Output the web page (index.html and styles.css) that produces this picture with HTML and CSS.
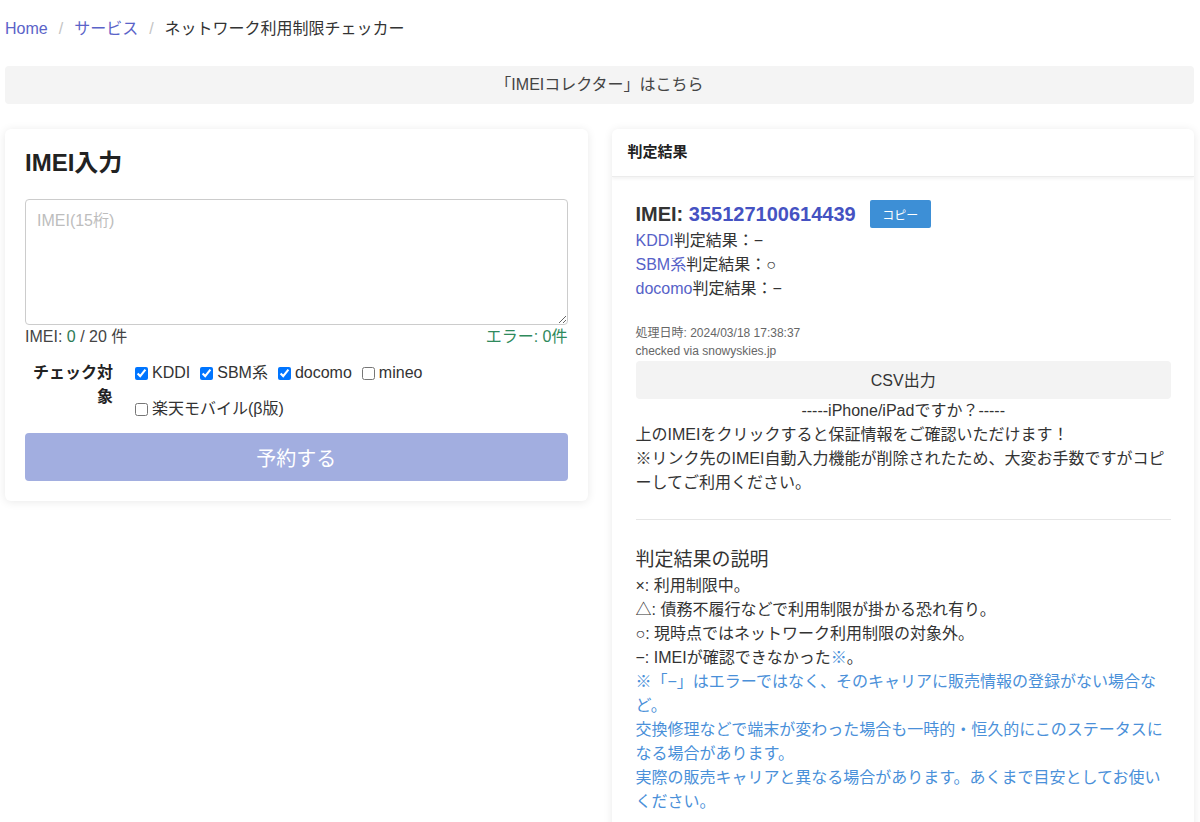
FILE: index.html
```html
<!DOCTYPE html>
<html lang="ja">
<head>
<meta charset="utf-8">
<title>ネットワーク利用制限チェッカー</title>
<link rel="stylesheet" href="styles.css">
</head>
<body>
<div class="page">
  <nav class="breadcrumb">
    <a href="#" class="crumb-link">Home</a>
    <span class="crumb-sep">/</span>
    <a href="#" class="crumb-link">サービス</a>
    <span class="crumb-sep">/</span>
    <span class="crumb-current">ネットワーク利用制限チェッカー</span>
  </nav>

  <a href="#" class="collector-bar">「IMEIコレクター」はこちら</a>

  <div class="columns">
    <section class="card input-card">
      <h2 class="card-title">IMEI入力</h2>
      <textarea class="imei-input" placeholder="IMEI(15桁)"></textarea>
      <div class="count-row">
        <span class="count">IMEI: <span class="count-num">0</span> / 20 件</span>
        <span class="error-count">エラー: 0件</span>
      </div>
      <div class="check-row">
        <div class="check-label">チェック対象</div>
        <div class="check-options">
          <label class="opt"><input type="checkbox" checked>KDDI</label>
          <label class="opt"><input type="checkbox" checked>SBM系</label>
          <label class="opt"><input type="checkbox" checked>docomo</label>
          <label class="opt"><input type="checkbox">mineo</label>
          <label class="opt"><input type="checkbox">楽天モバイル(β版)</label>
        </div>
      </div>
      <button class="submit-btn" disabled>予約する</button>
    </section>

    <section class="card result-card">
      <div class="result-header">判定結果</div>
      <div class="result-body">
        <div class="imei-row">
          <span class="imei-label">IMEI: <a href="#" class="imei-num">355127100614439</a></span>
          <button class="copy-btn">コピー</button>
        </div>
        <div class="result-lines">
          <div><a href="#" class="carrier">KDDI</a>判定結果：−</div>
          <div><a href="#" class="carrier">SBM系</a>判定結果：○</div>
          <div><a href="#" class="carrier">docomo</a>判定結果：−</div>
        </div>
        <div class="meta">
          <div>処理日時: 2024/03/18 17:38:37</div>
          <div>checked via snowyskies.jp</div>
        </div>
        <button class="csv-btn">CSV出力</button>
        <div class="iphone-title">-----iPhone/iPadですか？-----</div>
        <p class="text-block">上のIMEIをクリックすると保証情報をご確認いただけます！<br>※リンク先のIMEI自動入力機能が削除されたため、大変お手数ですがコピーしてご利用ください。</p>
        <hr class="divider">
        <h3 class="explain-title">判定結果の説明</h3>
        <div class="explain">
          <div>×: 利用制限中。</div>
          <div>△: 債務不履行などで利用制限が掛かる恐れ有り。</div>
          <div>○: 現時点ではネットワーク利用制限の対象外。</div>
          <div>−: IMEIが確認できなかった<span class="note">※</span>。</div>
          <div class="note">※「−」はエラーではなく、そのキャリアに販売情報の登録がない場合など。</div>
          <div class="note">交換修理などで端末が変わった場合も一時的・恒久的にこのステータスになる場合があります。</div>
          <div class="note">実際の販売キャリアと異なる場合があります。あくまで目安としてお使いください。</div>
        </div>
      </div>
    </section>
  </div>
</div>
</body>
</html>
```

FILE: styles.css
```css
* { box-sizing: border-box; }

html, body {
  margin: 0;
  padding: 0;
  background: #ffffff;
}

body {
  font-family: "Liberation Sans", "Noto Sans CJK JP", sans-serif;
  font-size: 16px;
  color: #333333;
}

.page {
  padding: 0 6px 0 5px;
}

a { text-decoration: none; }

.breadcrumb {
  padding-top: 18px;
  line-height: 22px;
  font-size: 16px;
  display: flex;
  gap: 11px;
}

.crumb-link { color: #5a63c8; }
.crumb-sep { color: #c4c4c4; }
.crumb-current { color: #333333; }

.collector-bar {
  display: block;
  margin-top: 26px;
  height: 38px;
  line-height: 38px;
  background: #f4f4f4;
  border-radius: 4px;
  text-align: center;
  color: #444444;
  font-size: 16px;
}

.columns {
  display: grid;
  grid-template-columns: 1fr 1fr;
  column-gap: 24px;
  align-items: start;
  margin-top: 25px;
}

.card {
  background: #ffffff;
  border-radius: 6px;
  box-shadow: 0 1px 10px rgba(0, 0, 0, 0.09);
}

.input-card {
  padding: 20px;
}

.card-title {
  margin: 0 0 22px;
  font-size: 24px;
  line-height: 28px;
  font-weight: bold;
  color: #222222;
}

.imei-input {
  display: block;
  width: 100%;
  height: 126px;
  border: 1px solid #cccccc;
  border-radius: 4px;
  padding: 10px 11px;
  font-family: "Liberation Sans", "Noto Sans CJK JP", sans-serif;
  font-size: 16px;
  line-height: 22px;
  resize: vertical;
}

.imei-input::placeholder { color: #bdbdbd; }

.count-row {
  display: flex;
  justify-content: space-between;
  line-height: 24px;
  color: #444444;
}

.count-num { color: #2d7a55; }
.error-count { color: #2f8a5c; }

.check-row {
  display: flex;
  margin-top: 12px;
  gap: 22px;
}

.check-label {
  width: 88px;
  flex: none;
  text-align: right;
  font-weight: bold;
  line-height: 24px;
  color: #222222;
}

.check-options {
  display: flex;
  flex-wrap: wrap;
  column-gap: 10px;
  row-gap: 12px;
  flex: 1;
}

.opt {
  display: flex;
  align-items: center;
  line-height: 24px;
  color: #333333;
}

.opt input {
  margin: 0 4px 0 0;
  width: 13px;
  height: 13px;
}

.submit-btn {
  display: block;
  width: 100%;
  margin-top: 12px;
  height: 48px;
  border: none;
  border-radius: 4px;
  background: #a2aee0;
  color: #ffffff;
  font-family: "Liberation Sans", "Noto Sans CJK JP", sans-serif;
  font-size: 20px;
}

.result-card {
  overflow: hidden;
}

.result-header {
  height: 48px;
  line-height: 46px;
  padding: 0 16px;
  font-size: 15px;
  font-weight: bold;
  color: #222222;
  border-bottom: 1px solid #ececec;
  box-shadow: 0 2px 3px rgba(0, 0, 0, 0.05);
}

.result-body {
  padding: 23px 23px 24px 24px;
}

.imei-row {
  display: flex;
  align-items: center;
  height: 28px;
  gap: 14px;
}

.imei-label {
  font-size: 20px;
  font-weight: bold;
  color: #333333;
}

.imei-num { color: #4552c2; }

.copy-btn {
  height: 28px;
  width: 61px;
  border: none;
  border-radius: 2px;
  background: #3d8fd6;
  color: #ffffff;
  font-family: "Liberation Sans", "Noto Sans CJK JP", sans-serif;
  font-size: 12px;
  padding: 0;
}

.result-lines {
  line-height: 24px;
  margin-top: 1px;
}

.carrier { color: #5662c8; }

.meta {
  margin-top: 23px;
  font-size: 12px;
  line-height: 18px;
  color: #666666;
}

.csv-btn {
  display: block;
  width: 100%;
  height: 38px;
  margin-top: 1px;
  border: none;
  border-radius: 4px;
  background: #f3f3f3;
  color: #333333;
  font-family: "Liberation Sans", "Noto Sans CJK JP", sans-serif;
  font-size: 16px;
  padding: 0 0 2px;
}

.iphone-title {
  text-align: center;
  line-height: 24px;
}

.text-block {
  margin: 0;
  line-height: 24px;
}

.divider {
  border: none;
  border-top: 1px solid #e6e6e6;
  margin: 24px 0 26px;
}

.explain-title {
  margin: 0;
  font-size: 19px;
  font-weight: normal;
  line-height: 28px;
  color: #333333;
}

.explain {
  line-height: 24px;
}

.note { color: #4a90d9; }
```
